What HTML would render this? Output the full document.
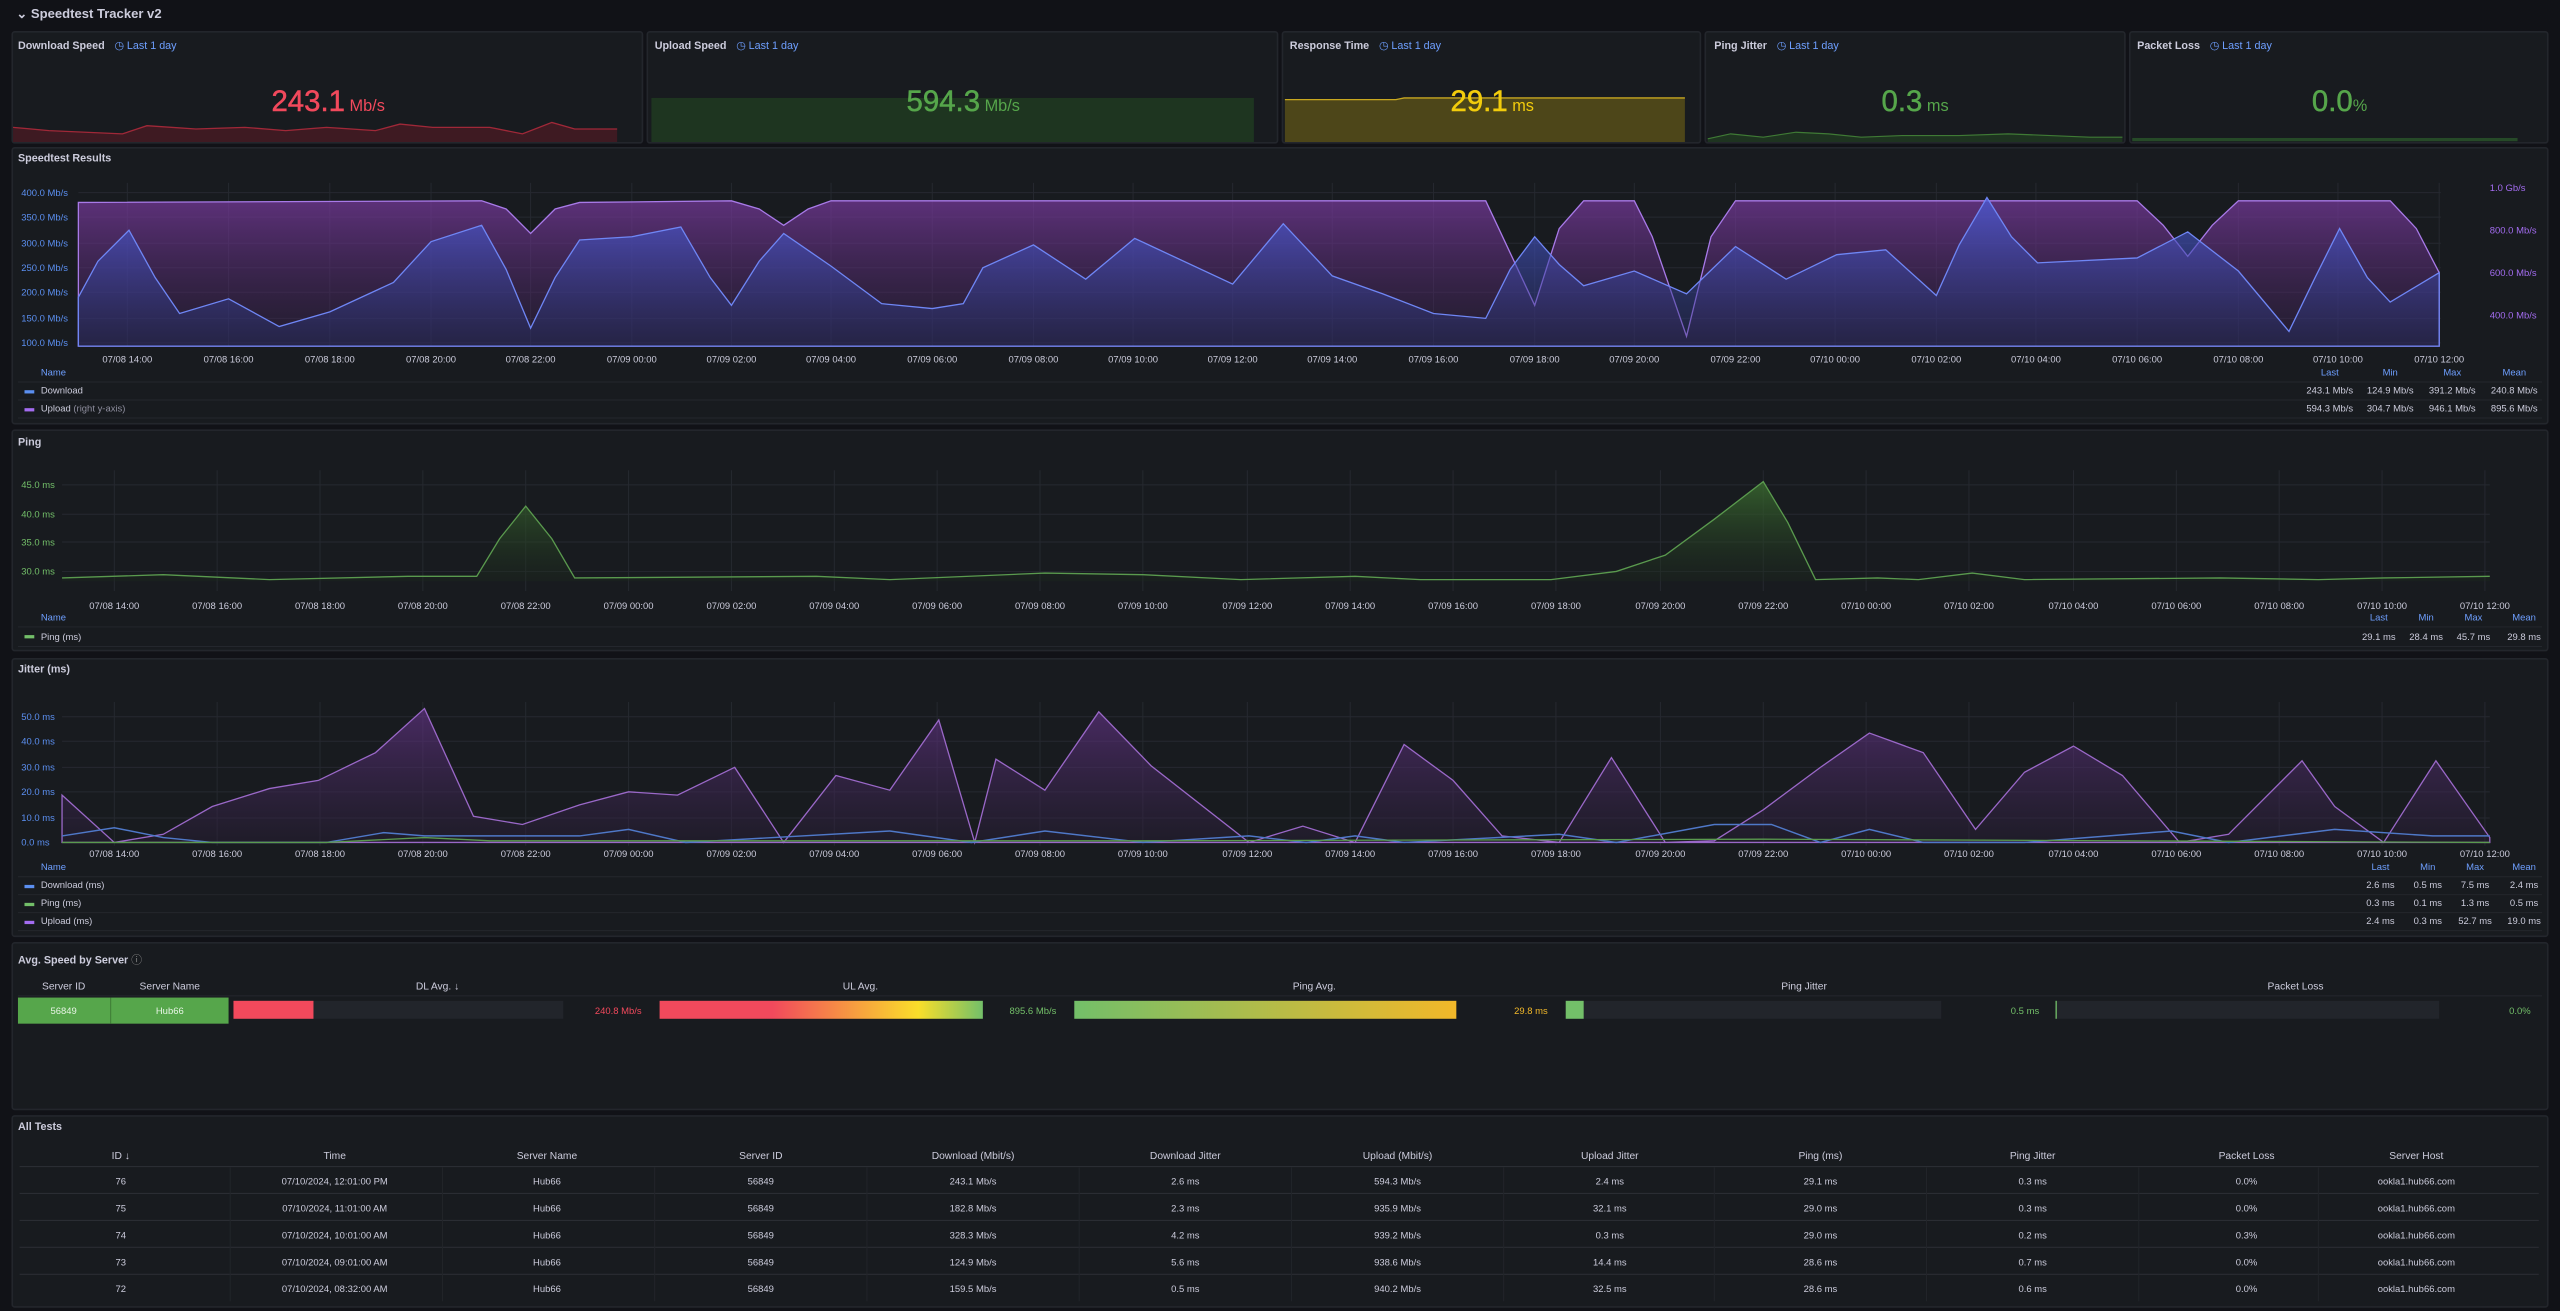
<!DOCTYPE html>
<html><head><meta charset="utf-8">
<style>
*{margin:0;padding:0;box-sizing:border-box}
html,body{width:2560px;height:1311px;overflow:hidden;background:#111217}
#w{position:absolute;left:0;top:0;width:1568px;height:803px;transform:scale(1.632653);transform-origin:0 0;font-family:"Liberation Sans",sans-serif;color:#ccccdc}
.p{position:absolute;background:#181b1f;border:1px solid #23262c;border-radius:2px}
.t{position:absolute;font-size:6.6px;font-weight:bold;color:#ccccdc;white-space:nowrap}
.tr{color:#6e9fff;font-weight:normal;margin-left:6px}
</style></head><body><div id="w">
<div class="t" style="left:10px;top:4px;font-size:8px">⌄ Speedtest Tracker v2</div>

<div class="p" style="left:7px;top:19px;width:387px;height:69px"></div>
<div class="p" style="left:396px;top:19px;width:387px;height:69px"></div>
<div class="p" style="left:785px;top:19px;width:257px;height:69px"></div>
<div class="p" style="left:1044px;top:19px;width:258px;height:69px"></div>
<div class="p" style="left:1304px;top:19px;width:257px;height:69px"></div>
<div class="t" style="left:11px;top:24px">Download Speed<span class="tr">◷ Last 1 day</span></div>
<div class="t" style="left:401px;top:24px">Upload Speed<span class="tr">◷ Last 1 day</span></div>
<div class="t" style="left:790px;top:24px">Response Time<span class="tr">◷ Last 1 day</span></div>
<div class="t" style="left:1050px;top:24px">Ping Jitter<span class="tr">◷ Last 1 day</span></div>
<div class="t" style="left:1309px;top:24px">Packet Loss<span class="tr">◷ Last 1 day</span></div>

<div class="p" style="left:7px;top:90px;width:1554px;height:170px"></div>
<div class="t" style="left:11px;top:94px">Speedtest Results</div>
<div class="p" style="left:7px;top:263px;width:1554px;height:136px"></div>
<div class="t" style="left:11px;top:268px">Ping</div>
<div class="p" style="left:7px;top:403px;width:1554px;height:171px"></div>
<div class="t" style="left:11px;top:407px">Jitter (ms)</div>
<div class="p" style="left:7px;top:577px;width:1554px;height:103px"></div>
<div class="t" style="left:11px;top:582px">Avg. Speed by Server <span style="font-weight:normal;color:#888">ⓘ</span></div>
<div class="p" style="left:7px;top:683px;width:1554px;height:118px"></div>
<div class="t" style="left:11px;top:687px">All Tests</div>

<svg style="position:absolute;left:0;top:0" width="1568" height="803" font-family="Liberation Sans, sans-serif" font-size="5.8">
<defs>
<linearGradient id="gd" x1="0" y1="0" x2="0" y2="1"><stop offset="0" stop-color="#4a5cd8" stop-opacity=".75"/><stop offset="1" stop-color="#2a3170" stop-opacity=".35"/></linearGradient>
<linearGradient id="gu" x1="0" y1="0" x2="0" y2="1"><stop offset="0" stop-color="#7a3aa0" stop-opacity=".7"/><stop offset="1" stop-color="#3a2050" stop-opacity=".3"/></linearGradient>
<linearGradient id="gp" x1="0" y1="0" x2="0" y2="1"><stop offset="0" stop-color="#3b6e30" stop-opacity=".8"/><stop offset="1" stop-color="#1c2a1c" stop-opacity=".3"/></linearGradient>
<linearGradient id="gj" x1="0" y1="0" x2="0" y2="1"><stop offset="0" stop-color="#6a3590" stop-opacity=".6"/><stop offset="1" stop-color="#2a1e38" stop-opacity=".4"/></linearGradient>
<linearGradient id="ul" x1="0" x2="1"><stop offset="0" stop-color="#f2495c"/><stop offset=".35" stop-color="#f2495c"/><stop offset=".8" stop-color="#fade2a"/><stop offset="1" stop-color="#73bf69"/></linearGradient>
<linearGradient id="pa" x1="0" x2="1"><stop offset="0" stop-color="#73bf69"/><stop offset="1" stop-color="#f2b829"/></linearGradient>
</defs>

<path d="M8,78 L30,80 L75,82 L90,77 L120,79 L150,78 L175,80 L200,78 L230,80 L245,76 L265,78 L300,78 L320,82 L338,75 L352,79 L378,79 L378,87 L8,87Z" fill="#3e1a22"/>
<path d="M8,78 L30,80 L75,82 L90,77 L120,79 L150,78 L175,80 L200,78 L230,80 L245,76 L265,78 L300,78 L320,82 L338,75 L352,79 L378,79" fill="none" stroke="#a02838" stroke-width=".8"/>
<rect x="399" y="60" width="369" height="27" fill="#1e3520"/>
<path d="M787,61 L855,61 L860,60 L1032,60 L1032,87 L787,87Z" fill="#4d4619"/>
<path d="M787,61 L855,61 L860,60 L1032,60" fill="none" stroke="#c8a820" stroke-width=".8"/>
<path d="M1046,85 L1060,82 L1080,84 L1100,81 L1120,82 L1140,84 L1165,83 L1200,83 L1230,82 L1280,84 L1300,84 L1300,87 L1046,87Z" fill="#1e3320"/>
<path d="M1046,85 L1060,82 L1080,84 L1100,81 L1120,82 L1140,84 L1165,83 L1200,83 L1230,82 L1280,84 L1300,84" fill="none" stroke="#3f7a35" stroke-width=".7"/>
<rect x="1306" y="84.5" width="236" height="2" fill="#264a28"/>
<g font-weight="normal" stroke-width=".3">
<text x="201" y="68" font-size="18" fill="#f2495c" stroke="#f2495c" text-anchor="middle">243.1<tspan font-size="10" stroke="none"> Mb/s</tspan></text>
<text x="590" y="68" font-size="18" fill="#56a64b" stroke="#56a64b" text-anchor="middle">594.3<tspan font-size="10" stroke="none"> Mb/s</tspan></text>
<text x="914" y="68" font-size="18" fill="#f2cc0c" stroke="#f2cc0c" text-anchor="middle">29.1<tspan font-size="10" stroke="none"> ms</tspan></text>
<text x="1173" y="68" font-size="18" fill="#56a64b" stroke="#56a64b" text-anchor="middle">0.3<tspan font-size="10" stroke="none"> ms</tspan></text>
<text x="1433" y="68" font-size="18" fill="#56a64b" stroke="#56a64b" text-anchor="middle">0.0<tspan font-size="10" stroke="none">%</tspan></text>
</g>

<g stroke="#262930" stroke-width=".6">
<path d="M48,118H1495M48,133H1495M48,149H1495M48,164H1495M48,179H1495M48,195H1495M48,210H1495"/>
<path d="M78,112V212M140,112V212M202,112V212M264,112V212M325,112V212M387,112V212M448,112V212M509,112V212M571,112V212M633,112V212M694,112V212M755,112V212M816,112V212M878,112V212M940,112V212M1001,112V212M1063,112V212M1124,112V212M1186,112V212M1247,112V212M1309,112V212M1371,112V212M1432,112V212M1494,112V212"/>
</g>
<g fill="#5b8ff0">
<text x="13" y="120">400.0 Mb/s</text><text x="13" y="135">350.0 Mb/s</text><text x="13" y="151">300.0 Mb/s</text><text x="13" y="166">250.0 Mb/s</text><text x="13" y="181">200.0 Mb/s</text><text x="13" y="197">150.0 Mb/s</text><text x="13" y="212">100.0 Mb/s</text></g>
<g fill="#a36cf0"><text x="1525" y="117">1.0 Gb/s</text><text x="1525" y="143">800.0 Mb/s</text><text x="1525" y="169">600.0 Mb/s</text><text x="1525" y="195">400.0 Mb/s</text></g>
<path d="M48,124 L295,123 L310,128 L325,143 L340,128 L355,124 L448,123 L465,128 L480,138 L495,128 L509,123 L910,123 L918,140 L940,187 L955,140 L970,123 L1001,123 L1012,145 L1033,206 L1048,145 L1063,123 L1309,123 L1325,138 L1340,157 L1355,138 L1371,123 L1464,123 L1480,140 L1494,167 L1494,212 L48,212Z" fill="url(#gu)" stroke="#a87ae8" stroke-width=".8"/>
<path d="M48,182 L60,160 L79,141 L95,170 L110,192 L140,183 L171,200 L202,191 L241,173 L264,148 L295,138 L310,165 L325,201 L340,170 L355,147 L387,145 L417,139 L435,170 L448,187 L465,160 L480,143 L509,163 L540,186 L571,189 L590,186 L602,164 L633,150 L665,171 L695,146 L755,174 L786,137 L816,169 L847,180 L878,192 L910,195 L925,165 L940,145 L955,162 L970,175 L1001,166 L1033,180 L1063,151 L1094,171 L1125,156 L1155,153 L1186,181 L1200,150 L1217,121 L1232,145 L1248,161 L1309,158 L1340,142 L1371,166 L1402,203 L1418,170 L1433,140 L1450,170 L1464,185 L1494,167 L1494,212 L48,212Z" fill="url(#gd)" stroke="#6f86f5" stroke-width=".8"/>
<g fill="#ccccdc" text-anchor="middle">
<text x="78" y="222">07/08 14:00</text><text x="140" y="222">07/08 16:00</text><text x="202" y="222">07/08 18:00</text><text x="264" y="222">07/08 20:00</text><text x="325" y="222">07/08 22:00</text><text x="387" y="222">07/09 00:00</text><text x="448" y="222">07/09 02:00</text><text x="509" y="222">07/09 04:00</text><text x="571" y="222">07/09 06:00</text><text x="633" y="222">07/09 08:00</text><text x="694" y="222">07/09 10:00</text><text x="755" y="222">07/09 12:00</text><text x="816" y="222">07/09 14:00</text><text x="878" y="222">07/09 16:00</text><text x="940" y="222">07/09 18:00</text><text x="1001" y="222">07/09 20:00</text><text x="1063" y="222">07/09 22:00</text><text x="1124" y="222">07/10 00:00</text><text x="1186" y="222">07/10 02:00</text><text x="1247" y="222">07/10 04:00</text><text x="1309" y="222">07/10 06:00</text><text x="1371" y="222">07/10 08:00</text><text x="1432" y="222">07/10 10:00</text><text x="1494" y="222">07/10 12:00</text></g>
<g fill="#6e9fff"><text x="25" y="230">Name</text><g text-anchor="middle"><text x="1427" y="230">Last</text><text x="1464" y="230">Min</text><text x="1502" y="230">Max</text><text x="1540" y="230">Mean</text></g></g>
<path d="M11,234H1557M11,245H1557M11,256H1557" stroke="#24272d" stroke-width=".6"/>
<rect x="15" y="239" width="6" height="2" fill="#5b8ff0"/><rect x="15" y="250" width="6" height="2" fill="#a36cf0"/>
<text x="25" y="241" fill="#ccccdc">Download</text><text x="25" y="252" fill="#ccccdc">Upload <tspan fill="#8e8e9e">(right y-axis)</tspan></text>
<g fill="#ccccdc" text-anchor="middle"><text x="1427" y="241">243.1 Mb/s</text><text x="1464" y="241">124.9 Mb/s</text><text x="1502" y="241">391.2 Mb/s</text><text x="1540" y="241">240.8 Mb/s</text>
<text x="1427" y="252">594.3 Mb/s</text><text x="1464" y="252">304.7 Mb/s</text><text x="1502" y="252">946.1 Mb/s</text><text x="1540" y="252">895.6 Mb/s</text></g>

<g stroke="#262930" stroke-width=".6">
<path d="M38,297H1525M38,315H1525M38,332H1525M38,350H1525"/>
<path d="M70,288V362M133,288V362M196,288V362M259,288V362M322,288V362M385,288V362M448,288V362M511,288V362M574,288V362M637,288V362M700,288V362M764,288V362M827,288V362M890,288V362M953,288V362M1017,288V362M1080,288V362M1143,288V362M1206,288V362M1270,288V362M1333,288V362M1396,288V362M1459,288V362M1522,288V362"/></g>
<g fill="#73bf69"><text x="13" y="299">45.0 ms</text><text x="13" y="317">40.0 ms</text><text x="13" y="334">35.0 ms</text><text x="13" y="352">30.0 ms</text></g>
<path d="M38,354 L100,352 L165,355 L250,353 L292,353 L306,330 L322,310 L338,330 L352,354 L500,353 L545,355 L640,351 L700,352 L760,355 L830,353 L870,355 L950,355 L990,350 L1020,340 L1050,318 L1080,295 L1095,320 L1112,355 L1150,354 L1175,355 L1208,351 L1240,355 L1360,354 L1420,355 L1460,354 L1525,353 L1525,356 L38,356Z" fill="url(#gp)"/>
<path d="M38,354 L100,352 L165,355 L250,353 L292,353 L306,330 L322,310 L338,330 L352,354 L500,353 L545,355 L640,351 L700,352 L760,355 L830,353 L870,355 L950,355 L990,350 L1020,340 L1050,318 L1080,295 L1095,320 L1112,355 L1150,354 L1175,355 L1208,351 L1240,355 L1360,354 L1420,355 L1460,354 L1525,353" fill="none" stroke="#5a9a4e" stroke-width=".8"/>
<g fill="#ccccdc" text-anchor="middle">
<text x="70" y="373">07/08 14:00</text><text x="133" y="373">07/08 16:00</text><text x="196" y="373">07/08 18:00</text><text x="259" y="373">07/08 20:00</text><text x="322" y="373">07/08 22:00</text><text x="385" y="373">07/09 00:00</text><text x="448" y="373">07/09 02:00</text><text x="511" y="373">07/09 04:00</text><text x="574" y="373">07/09 06:00</text><text x="637" y="373">07/09 08:00</text><text x="700" y="373">07/09 10:00</text><text x="764" y="373">07/09 12:00</text><text x="827" y="373">07/09 14:00</text><text x="890" y="373">07/09 16:00</text><text x="953" y="373">07/09 18:00</text><text x="1017" y="373">07/09 20:00</text><text x="1080" y="373">07/09 22:00</text><text x="1143" y="373">07/10 00:00</text><text x="1206" y="373">07/10 02:00</text><text x="1270" y="373">07/10 04:00</text><text x="1333" y="373">07/10 06:00</text><text x="1396" y="373">07/10 08:00</text><text x="1459" y="373">07/10 10:00</text><text x="1522" y="373">07/10 12:00</text></g>
<g fill="#6e9fff"><text x="25" y="380">Name</text><g text-anchor="middle"><text x="1457" y="380">Last</text><text x="1486" y="380">Min</text><text x="1515" y="380">Max</text><text x="1546" y="380">Mean</text></g></g>
<path d="M11,384H1557M11,396H1557" stroke="#24272d" stroke-width=".6"/>
<rect x="15" y="389" width="6" height="2" fill="#73bf69"/><text x="25" y="392" fill="#ccccdc">Ping (ms)</text>
<g fill="#ccccdc" text-anchor="middle"><text x="1457" y="392">29.1 ms</text><text x="1486" y="392">28.4 ms</text><text x="1515" y="392">45.7 ms</text><text x="1546" y="392">29.8 ms</text></g>

<g stroke="#262930" stroke-width=".6">
<path d="M38,439H1525M38,454H1525M38,470H1525M38,485H1525M38,501H1525M38,516H1525"/>
<path d="M70,430V518M133,430V518M196,430V518M259,430V518M322,430V518M385,430V518M448,430V518M511,430V518M574,430V518M637,430V518M700,430V518M764,430V518M827,430V518M890,430V518M953,430V518M1017,430V518M1080,430V518M1143,430V518M1206,430V518M1270,430V518M1333,430V518M1396,430V518M1459,430V518M1522,430V518"/></g>
<g fill="#5b8ff0"><text x="13" y="441">50.0 ms</text><text x="13" y="456">40.0 ms</text><text x="13" y="472">30.0 ms</text><text x="13" y="487">20.0 ms</text><text x="13" y="503">10.0 ms</text><text x="13" y="518">0.0 ms</text></g>
<path d="M38,487 L70,516 L100,511 L130,494 L165,483 L195,478 L230,461 L260,434 L290,500 L320,505 L355,493 L385,485 L415,487 L450,470 L480,516 L512,475 L545,484 L575,441 L597,516 L610,465 L640,484 L673,436 L705,469 L765,516 L798,506 L830,516 L860,456 L890,478 L920,512 L955,516 L987,464 L1020,516 L1050,515 L1080,496 L1115,470 L1145,449 L1178,461 L1210,508 L1240,473 L1270,457 L1300,475 L1335,516 L1365,511 L1410,466 L1430,494 L1460,516 L1492,466 L1525,513 L1525,516 L38,516Z" fill="url(#gj)" stroke="#9a68c8" stroke-width=".8"/>
<path d="M38,512 L70,507 L100,513 L130,516 L200,516 L235,510 L260,512 L355,512 L385,508 L420,516 L545,509 L595,516 L640,509 L700,516 L765,512 L800,516 L830,512 L860,516 L955,511 L990,516 L1050,505 L1085,505 L1115,516 L1145,508 L1178,516 L1240,516 L1330,509 L1365,516 L1430,508 L1490,512 L1525,512" fill="none" stroke="#4f78c8" stroke-width=".9"/>
<path d="M38,516 L200,516 L260,513 L300,515 L700,515 L1080,514 L1525,516" fill="none" stroke="#5a9a4e" stroke-width=".8"/>
<g fill="#ccccdc" text-anchor="middle">
<text x="70" y="525">07/08 14:00</text><text x="133" y="525">07/08 16:00</text><text x="196" y="525">07/08 18:00</text><text x="259" y="525">07/08 20:00</text><text x="322" y="525">07/08 22:00</text><text x="385" y="525">07/09 00:00</text><text x="448" y="525">07/09 02:00</text><text x="511" y="525">07/09 04:00</text><text x="574" y="525">07/09 06:00</text><text x="637" y="525">07/09 08:00</text><text x="700" y="525">07/09 10:00</text><text x="764" y="525">07/09 12:00</text><text x="827" y="525">07/09 14:00</text><text x="890" y="525">07/09 16:00</text><text x="953" y="525">07/09 18:00</text><text x="1017" y="525">07/09 20:00</text><text x="1080" y="525">07/09 22:00</text><text x="1143" y="525">07/10 00:00</text><text x="1206" y="525">07/10 02:00</text><text x="1270" y="525">07/10 04:00</text><text x="1333" y="525">07/10 06:00</text><text x="1396" y="525">07/10 08:00</text><text x="1459" y="525">07/10 10:00</text><text x="1522" y="525">07/10 12:00</text></g>
<g fill="#6e9fff"><text x="25" y="533">Name</text><g text-anchor="middle"><text x="1458" y="533">Last</text><text x="1487" y="533">Min</text><text x="1516" y="533">Max</text><text x="1546" y="533">Mean</text></g></g>
<path d="M11,537H1557M11,548H1557M11,559H1557M11,570H1557" stroke="#24272d" stroke-width=".6"/>
<rect x="15" y="542" width="6" height="2" fill="#5b8ff0"/><rect x="15" y="553" width="6" height="2" fill="#73bf69"/><rect x="15" y="564" width="6" height="2" fill="#a36cf0"/>
<g fill="#ccccdc"><text x="25" y="544">Download (ms)</text><text x="25" y="555">Ping (ms)</text><text x="25" y="566">Upload (ms)</text></g>
<g fill="#ccccdc" text-anchor="middle"><text x="1458" y="544">2.6 ms</text><text x="1487" y="544">0.5 ms</text><text x="1516" y="544">7.5 ms</text><text x="1546" y="544">2.4 ms</text>
<text x="1458" y="555">0.3 ms</text><text x="1487" y="555">0.1 ms</text><text x="1516" y="555">1.3 ms</text><text x="1546" y="555">0.5 ms</text>
<text x="1458" y="566">2.4 ms</text><text x="1487" y="566">0.3 ms</text><text x="1516" y="566">52.7 ms</text><text x="1546" y="566">19.0 ms</text></g>

<g fill="#ccccdc" text-anchor="middle" font-size="6.3"><text x="39" y="606">Server ID</text><text x="104" y="606">Server Name</text><text x="268" y="606">DL Avg. ↓</text><text x="527" y="606">UL Avg.</text><text x="805" y="606">Ping Avg.</text><text x="1105" y="606">Ping Jitter</text><text x="1406" y="606">Packet Loss</text></g>
<path d="M11,610H1557" stroke="#24272d" stroke-width=".6"/>
<rect x="11" y="611" width="129" height="16" fill="#56a64b"/><rect x="67.5" y="611" width=".6" height="16" fill="#3d7a35"/>
<text x="39" y="621" fill="#e8f5e6" text-anchor="middle">56849</text><text x="104" y="621" fill="#e8f5e6" text-anchor="middle">Hub66</text>
<rect x="143" y="613" width="202" height="11" fill="#22252b"/><rect x="143" y="613" width="49" height="11" fill="#f2495c"/>
<text x="393" y="621" fill="#f2495c" text-anchor="end">240.8 Mb/s</text>
<rect x="404" y="613" width="198" height="11" fill="url(#ul)"/>
<text x="647" y="621" fill="#73bf69" text-anchor="end">895.6 Mb/s</text>
<rect x="658" y="613" width="234" height="11" fill="url(#pa)"/>
<text x="948" y="621" fill="#f2b829" text-anchor="end">29.8 ms</text>
<rect x="959" y="613" width="230" height="11" fill="#22252b"/><rect x="959" y="613" width="11" height="11" fill="#73bf69"/>
<text x="1249" y="621" fill="#73bf69" text-anchor="end">0.5 ms</text>
<rect x="1259" y="613" width="235" height="11" fill="#22252b"/><rect x="1259" y="613" width=".8" height="11" fill="#73bf69"/>
<text x="1550" y="621" fill="#73bf69" text-anchor="end">0.0%</text>

<g fill="#ccccdc" text-anchor="middle" font-size="6.3">
<text x="74" y="710">ID ↓</text><text x="205" y="710">Time</text><text x="335" y="710">Server Name</text><text x="466" y="710">Server ID</text><text x="596" y="710">Download (Mbit/s)</text><text x="726" y="710">Download Jitter</text><text x="856" y="710">Upload (Mbit/s)</text><text x="986" y="710">Upload Jitter</text><text x="1115" y="710">Ping (ms)</text><text x="1245" y="710">Ping Jitter</text><text x="1376" y="710">Packet Loss</text><text x="1480" y="710">Server Host</text></g>
<path d="M12,714.5H1555M12,731H1555M12,747.5H1555M12,764H1555M12,780.5H1555" stroke="#2a2d33" stroke-width=".7"/>
<path d="M141,715V797M271,715V797M401,715V797M531,715V797M661,715V797M791,715V797M921,715V797M1050,715V797M1180,715V797M1310,715V797M1420,715V797" stroke="#22252a" stroke-width=".6"/>
<g fill="#ccccdc" text-anchor="middle">
<text x="74" y="725.5">76</text><text x="205" y="725.5">07/10/2024, 12:01:00 PM</text><text x="335" y="725.5">Hub66</text><text x="466" y="725.5">56849</text><text x="596" y="725.5">243.1 Mb/s</text><text x="726" y="725.5">2.6 ms</text><text x="856" y="725.5">594.3 Mb/s</text><text x="986" y="725.5">2.4 ms</text><text x="1115" y="725.5">29.1 ms</text><text x="1245" y="725.5">0.3 ms</text><text x="1376" y="725.5">0.0%</text><text x="1480" y="725.5">ookla1.hub66.com</text>
<text x="74" y="742">75</text><text x="205" y="742">07/10/2024, 11:01:00 AM</text><text x="335" y="742">Hub66</text><text x="466" y="742">56849</text><text x="596" y="742">182.8 Mb/s</text><text x="726" y="742">2.3 ms</text><text x="856" y="742">935.9 Mb/s</text><text x="986" y="742">32.1 ms</text><text x="1115" y="742">29.0 ms</text><text x="1245" y="742">0.3 ms</text><text x="1376" y="742">0.0%</text><text x="1480" y="742">ookla1.hub66.com</text>
<text x="74" y="758.5">74</text><text x="205" y="758.5">07/10/2024, 10:01:00 AM</text><text x="335" y="758.5">Hub66</text><text x="466" y="758.5">56849</text><text x="596" y="758.5">328.3 Mb/s</text><text x="726" y="758.5">4.2 ms</text><text x="856" y="758.5">939.2 Mb/s</text><text x="986" y="758.5">0.3 ms</text><text x="1115" y="758.5">29.0 ms</text><text x="1245" y="758.5">0.2 ms</text><text x="1376" y="758.5">0.3%</text><text x="1480" y="758.5">ookla1.hub66.com</text>
<text x="74" y="775">73</text><text x="205" y="775">07/10/2024, 09:01:00 AM</text><text x="335" y="775">Hub66</text><text x="466" y="775">56849</text><text x="596" y="775">124.9 Mb/s</text><text x="726" y="775">5.6 ms</text><text x="856" y="775">938.6 Mb/s</text><text x="986" y="775">14.4 ms</text><text x="1115" y="775">28.6 ms</text><text x="1245" y="775">0.7 ms</text><text x="1376" y="775">0.0%</text><text x="1480" y="775">ookla1.hub66.com</text>
<text x="74" y="791.5">72</text><text x="205" y="791.5">07/10/2024, 08:32:00 AM</text><text x="335" y="791.5">Hub66</text><text x="466" y="791.5">56849</text><text x="596" y="791.5">159.5 Mb/s</text><text x="726" y="791.5">0.5 ms</text><text x="856" y="791.5">940.2 Mb/s</text><text x="986" y="791.5">32.5 ms</text><text x="1115" y="791.5">28.6 ms</text><text x="1245" y="791.5">0.6 ms</text><text x="1376" y="791.5">0.0%</text><text x="1480" y="791.5">ookla1.hub66.com</text>
</g>
</svg>
</div></body></html>
